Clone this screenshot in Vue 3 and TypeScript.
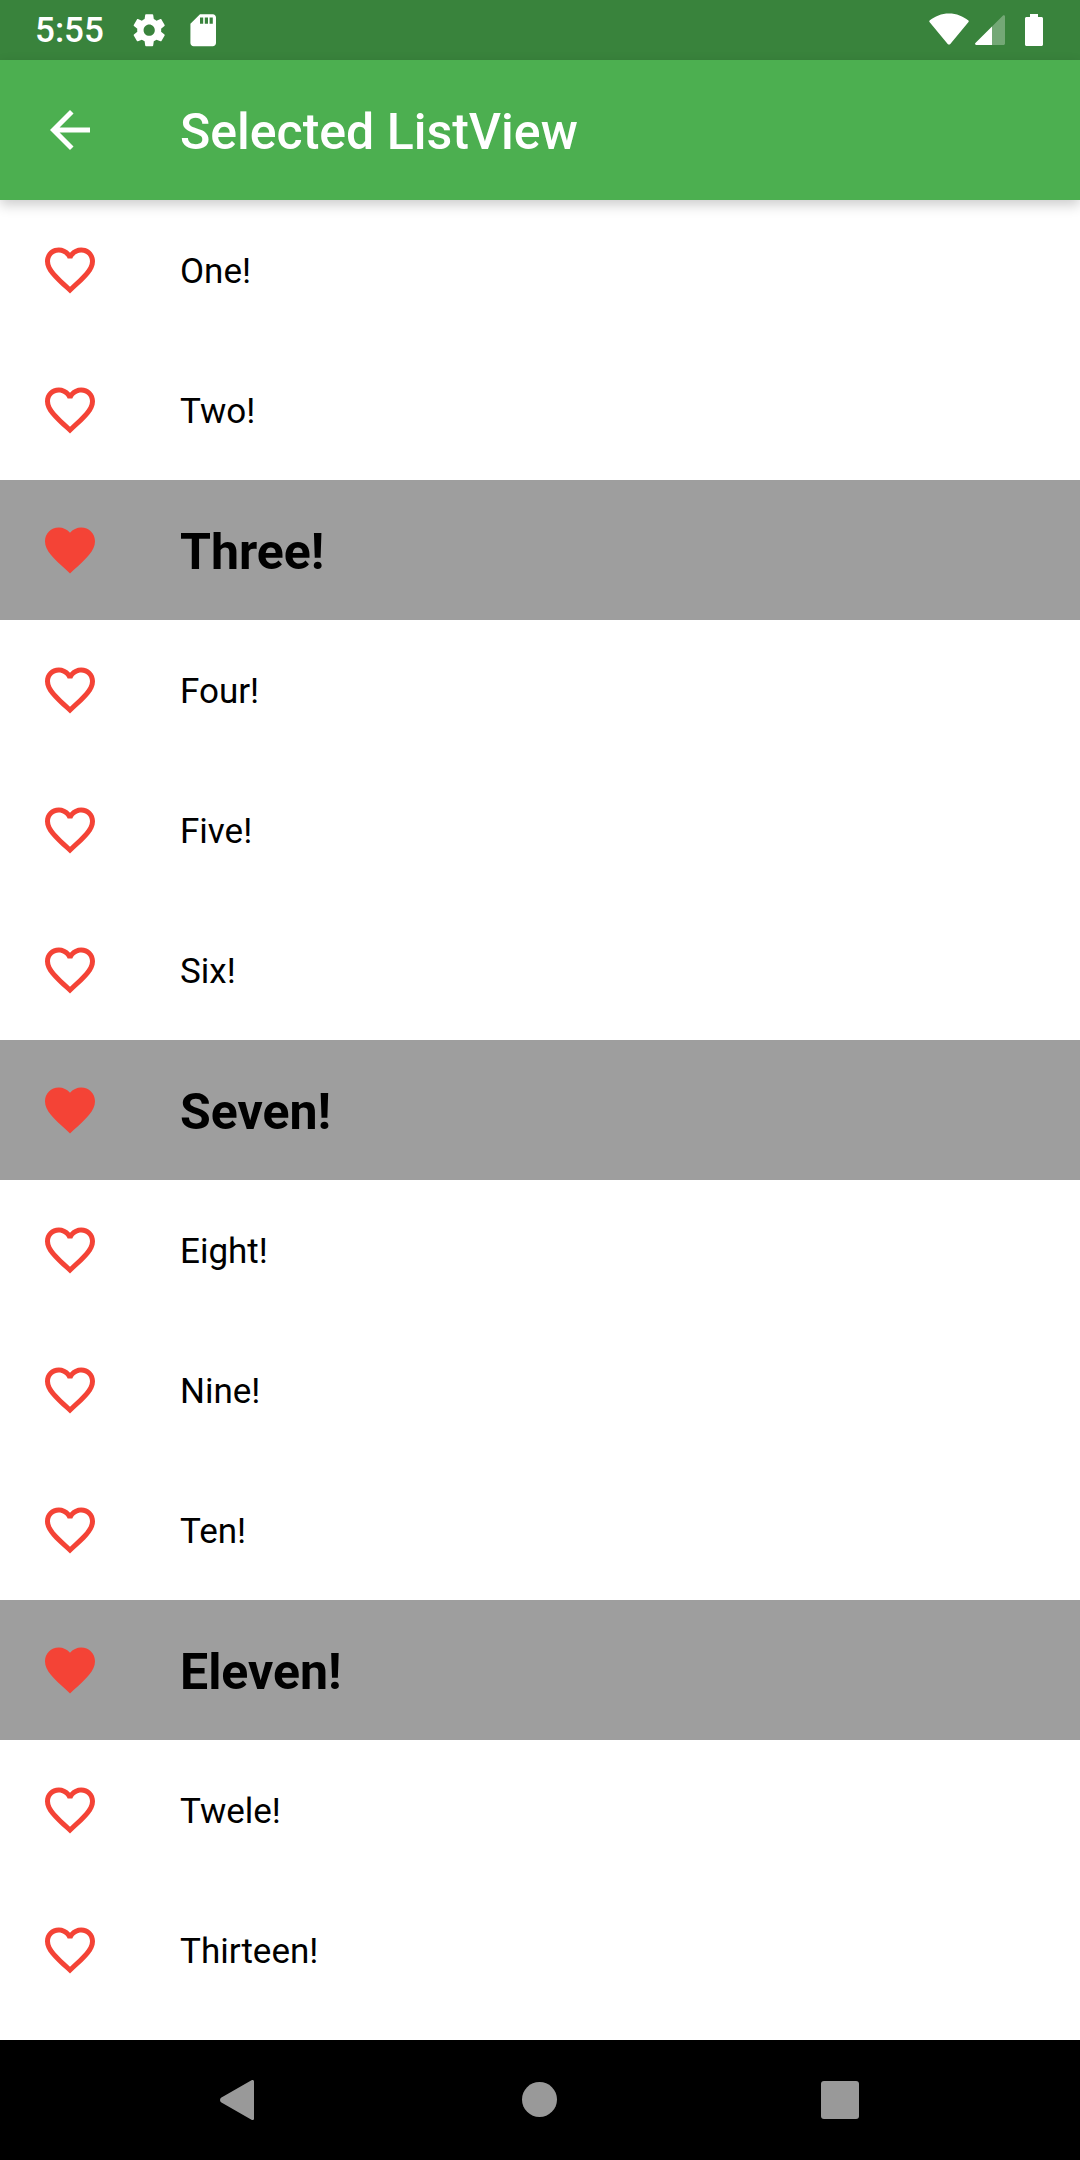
<script setup lang="ts">
interface Row {
  label: string;
  selected: boolean;
}

const labels = [
  'One!', 'Two!', 'Three!', 'Four!', 'Five!', 'Six!', 'Seven!',
  'Eight!', 'Nine!', 'Ten!', 'Eleven!', 'Twele!', 'Thirteen!'
];

const rows: Row[] = labels.map((label, i) => ({
  label,
  selected: i % 4 === 2
}));

const heartFull =
  'M12 21.35l-1.45-1.32C5.4 15.36 2 12.28 2 8.5 2 5.42 4.42 3 7.5 3c1.74 0 3.41.81 4.5 2.09C13.09 3.81 14.76 3 16.5 3 19.58 3 22 5.42 22 8.5c0 3.78-3.4 6.86-8.55 11.54L12 21.35z';
const heartOutline =
  'M16.5 3c-1.74 0-3.41.81-4.5 2.09C10.91 3.81 9.24 3 7.5 3 4.42 3 2 5.42 2 8.5c0 3.78 3.4 6.86 8.55 11.54L12 21.35l1.45-1.32C18.6 15.36 22 12.28 22 8.5 22 5.42 19.58 3 16.5 3zm-4.4 15.55l-.1.1-.1-.1C7.14 14.24 4 11.39 4 8.5 4 6.5 5.5 5 7.5 5c1.54 0 3.04.99 3.57 2.36h1.87C13.46 5.99 14.96 5 16.5 5c2 0 3.5 1.5 3.5 3.5 0 2.89-3.14 5.74-7.9 10.05z';
</script>

<template>
  <div class="screen">
    <div class="status-bar">
      <span class="time">5:55</span>
      <svg class="status-icon settings" viewBox="0 0 24 24" fill="#fff">
        <path d="M19.43 12.98c.04-.32.07-.64.07-.98s-.03-.66-.07-.98l2.11-1.65c.19-.15.24-.42.12-.64l-2-3.46c-.12-.22-.39-.3-.61-.22l-2.49 1c-.52-.4-1.08-.73-1.69-.98l-.38-2.65C14.46 2.18 14.25 2 14 2h-4c-.25 0-.46.18-.49.42l-.38 2.65c-.61.25-1.17.59-1.69.98l-2.49-1c-.23-.09-.49 0-.61.22l-2 3.46c-.13.22-.07.49.12.64l2.11 1.65c-.04.32-.07.65-.07.98s.03.66.07.98l-2.11 1.65c-.19.15-.24.42-.12.64l2 3.46c.12.22.39.3.61.22l2.49-1c.52.4 1.08.73 1.69.98l.38 2.65c.03.24.24.42.49.42h4c.25 0 .46-.18.49-.42l.38-2.65c.61-.25 1.17-.59 1.69-.98l2.49 1c.23.09.49 0 .61-.22l2-3.46c.12-.22.07-.49-.12-.64l-2.11-1.65zM12 15.5c-1.93 0-3.5-1.57-3.5-3.5s1.57-3.5 3.5-3.5 3.5 1.57 3.5 3.5-1.57 3.5-3.5 3.5z" />
      </svg>
      <svg class="status-icon sd" viewBox="0 0 24 24" fill="#fff">
        <path d="M18 2h-8L4.02 8 4 20c0 1.1.9 2 2 2h12c1.1 0 2-.9 2-2V4c0-1.1-.9-2-2-2zm-6 6h-2V4h2v4zm3 0h-2V4h2v4zm3 0h-2V4h2v4z" />
      </svg>
      <div class="status-right">
        <svg class="wifi" viewBox="0 0 40 32" fill="#fff">
          <path d="M.6 7.6C5.8 3 12.6.4 20 .4s14.2 2.6 19.4 7.2c.5.4.5 1 .1 1.5L21.3 31c-.7.8-1.9.8-2.6 0L.5 9.1C.1 8.6.1 8 .6 7.6z" />
        </svg>
        <svg class="signal" viewBox="0 0 30 30" fill="#fff">
          <path d="M17 30H1.2C.2 30-.3 28.8.4 28.1L17 11.5z" />
          <path d="M17 30V11.500L28 .6c.7-.7 2-.2 2 .8V28.500c0 .8-.7 1.500-1.500 1.500z" opacity="0.3" />
        </svg>
        <svg class="battery" viewBox="0 0 18 32" fill="#fff">
          <path d="M5 0h8v3h3.500c.8 0 1.500.7 1.500 1.500v26c0 .8-.7 1.500-1.500 1.500h-15C.7 32 0 31.300 0 30.500v-26C0 3.700.7 3 1.500 3H5z" />
        </svg>
      </div>
    </div>

    <header class="app-bar">
      <svg class="icon" viewBox="0 0 24 24" fill="#fff">
        <path d="M20 11H7.830l5.590-5.590L12 4l-8 8 8 8 1.410-1.410L7.830 13H20v-2z" />
      </svg>
      <h1 class="title">Selected ListView</h1>
    </header>

    <ul class="list">
      <li
        v-for="row in rows"
        :key="row.label"
        class="row"
        :class="{ selected: row.selected }"
      >
        <svg class="icon" viewBox="0 0 24 24" fill="#f44336">
          <path :d="row.selected ? heartFull : heartOutline" />
        </svg>
        <span class="label">{{ row.label }}</span>
      </li>
    </ul>

    <nav class="nav-bar">
      <svg class="nav-icon" viewBox="0 0 60 60" fill="#999">
        <path d="M41.500 10.300c1.200-.9 2.500-.3 2.500 1.200v37c0 1.500-1.300 2.100-2.500 1.200L11 32.200c-1.300-1-1.300-3.400 0-4.400z" />
      </svg>
      <svg class="nav-icon" viewBox="0 0 60 60" fill="#999">
        <circle cx="29.500" cy="29.500" r="17.500" />
      </svg>
      <svg class="nav-icon" viewBox="0 0 60 60" fill="#999">
        <rect x="11" y="11" width="38" height="38" rx="3" />
      </svg>
    </nav>
  </div>
</template>

<style scoped>
.screen {
  display: flex;
  flex-direction: column;
  width: 1080px;
  height: 2160px;
  overflow: hidden;
  background: #fff;
  font-family: Roboto, "Liberation Sans", sans-serif;
}

.status-bar {
  display: flex;
  align-items: center;
  flex: none;
  height: 60px;
  padding: 0 37px 0 35px;
  color: #fff;
  background: #39833c;
}

.time {
  width: 95px;
  padding-top: 1px;
  font-size: 35px;
  font-weight: 500;
}

.status-icon {
  width: 38.4px;
  height: 38.4px;
}

.sd {
  margin-left: 16px;
}

.status-right {
  display: flex;
  align-items: center;
  margin-left: auto;
}

.wifi {
  width: 40px;
  height: 32px;
  margin-top: -2px;
}

.signal {
  width: 30px;
  height: 30px;
  margin-left: 6px;
}

.battery {
  width: 18px;
  height: 32px;
  margin-left: 20px;
}

.app-bar {
  position: relative;
  z-index: 1;
  display: flex;
  align-items: center;
  flex: none;
  height: 140px;
  padding: 0 40px;
  background: #4caf50;
  box-shadow: 0 5px 12px rgba(0, 0, 0, 0.2);
}

.icon {
  flex: none;
  width: 60px;
  height: 60px;
}

.title {
  margin: 0 0 0 80px;
  padding-top: 3px;
  color: #fff;
  font-size: 50px;
  font-weight: 500;
}

.list {
  flex: 1;
  margin: 0;
  padding: 0;
  overflow: hidden;
  list-style: none;
}

.row {
  display: flex;
  align-items: center;
  height: 140px;
  padding: 0 40px;
}

.row.selected {
  background: #9e9e9e;
}

.label {
  margin-left: 80px;
  padding-top: 3px;
  color: #000;
  font-size: 35px;
}

.selected .label {
  font-size: 50px;
  font-weight: 700;
}

.nav-bar {
  display: flex;
  align-items: center;
  justify-content: center;
  gap: 240px;
  flex: none;
  height: 120px;
  background: #000;
}

.nav-icon {
  width: 60px;
  height: 60px;
}
</style>
